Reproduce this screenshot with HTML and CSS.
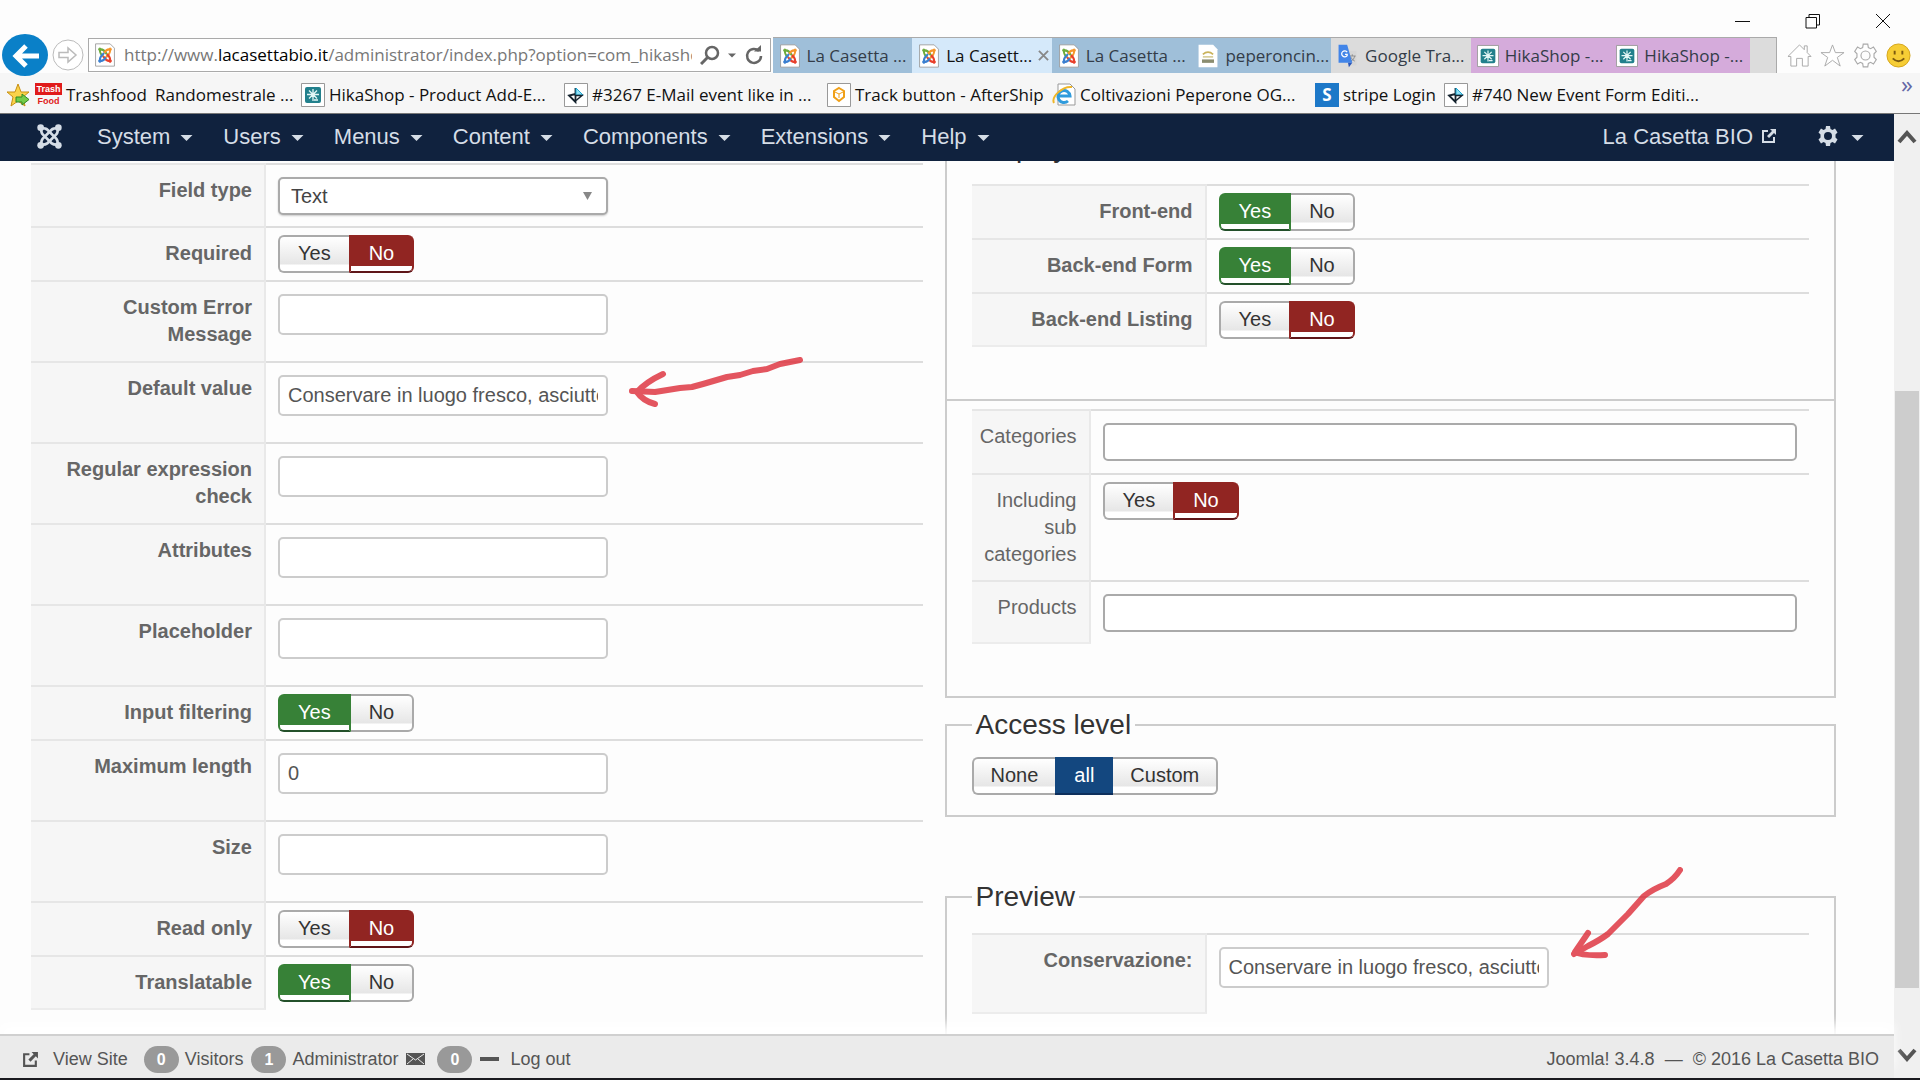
FILE: index.html
```html
<!DOCTYPE html>
<html lang="en">
  <head>
    <meta charset="UTF-8" />
    <meta name="viewport" content="width=device-width, initial-scale=1.0" />
    <title>La Casetta BIO - Administration</title>
    <link rel="stylesheet" href="styles.css">
  </head>
  <body>
    <!-- shared icons -->
    <svg class="sprite" aria-hidden="true">
      <symbol id="joomla" viewBox="0 0 24 24">
        <g fill="none" stroke="currentColor" stroke-width="2.600">
          <path d="M4 4C6 4 8.500 4 10 5.500L18.500 14C20 15.500 20 18 20 20" />
          <path d="M4 4C4 6 4 8.500 5.500 10L14 18.500C15.500 20 18 20 20 20" />
          <path d="M20 4C18 4 15.500 4 14 5.500L5.500 14C4 15.500 4 18 4 20" />
          <path d="M20 4C20 6 20 8.500 18.500 10L10 18.500C8.500 20 6 20 4 20" />
        </g>
        <g fill="currentColor">
          <circle cx="3.500" cy="3.500" r="3.200" /><circle cx="20.500" cy="3.500" r="3.200" />
          <circle cx="3.500" cy="20.500" r="3.200" /><circle cx="20.500" cy="20.500" r="3.200" />
        </g>
      </symbol>
      <symbol id="joomla-page" viewBox="0 0 24 28">
        <path d="M1 1h17l5 5v21H1z" fill="#fff" stroke="#999" />
        <g fill="none" stroke-width="3.200" transform="translate(3 4) scale(.75 .85)">
          <path d="M4 4C6 4 8.500 4 10 5.500L15 10.500M4 4C4 6 4 8.500 5.500 10L9 13.500" stroke="#6cab3c" />
          <path d="M20 4C20 6 20 8.500 18.500 10L13.500 15M20 4C18 4 15.500 4 14 5.500L10.500 9" stroke="#f6962b" />
          <path d="M20 20C18 20 15.500 20 14 18.500L9 13.500M20 20C20 18 20 15.500 18.500 14L15 10.500" stroke="#e8402c" />
          <path d="M4 20C4 18 4 15.500 5.500 14L10.500 9M4 20C6 20 8.500 20 10 18.500L13.500 15" stroke="#3b7fd0" />
          <circle cx="4" cy="4" r="2" fill="#6cab3c" stroke="#6cab3c" stroke-width="1" /><circle cx="20" cy="4" r="2" fill="#f6962b" stroke="#f6962b" stroke-width="1" />
          <circle cx="4" cy="20" r="2" fill="#3b7fd0" stroke="#3b7fd0" stroke-width="1" /><circle cx="20" cy="20" r="2" fill="#e8402c" stroke="#e8402c" stroke-width="1" />
        </g>
      </symbol>
      <symbol id="hika" viewBox="0 0 24 24">
        <path d="M.5.5h23v23H.5z" fill="#fff" stroke="#999" />
        <rect x="4" y="4" width="16" height="16" rx="2" fill="#22808c" />
        <path d="M12 6v12M6 11.500h12M8 7.500l8 8M16 7.500l-8 8M13 17h4" stroke="#e3f6f6" stroke-width="1.300" />
      </symbol>
      <symbol id="event" viewBox="0 0 24 24">
        <path d="M.5.5h23v23H.5z" fill="#fff" stroke="#999" />
        <path d="M11.500 5v14L5 12.500l6.500-1.500" fill="none" stroke="#15232e" stroke-width="1.800" />
        <path d="M12 5l7 7h-7z" fill="#8fe1f7" stroke="#22a7d0" />
        <path d="M11 12.500h7l-6 5" fill="none" stroke="#15232e" stroke-width="1.500" />
      </symbol>
      <symbol id="external" viewBox="0 0 16 16">
        <path d="M7 3H2v11h11V9" fill="none" stroke="currentColor" stroke-width="2" />
        <path d="M9 1h6v6l-2-2-5 5-2-2 5-5z" fill="currentColor" />
      </symbol>
      <symbol id="gear" viewBox="-1 -1 22 22">
        <path fill-rule="evenodd" d="M8 0h4l.5 3 2 1L17 2.500l2.500 4-2 2v3l2 2-2.500 4-2.500-1.500-2 1-.5 3H8l-.5-3-2-1L3 17.500l-2.500-4 2-2v-3l-2-2 2.500-4L5.500 4l2-1zM10 6a4 4 0 1 0 0 8 4 4 0 0 0 0-8z" />
      </symbol>
      <symbol id="caret" viewBox="0 0 12 6"><path d="M0 0h12L6 6z" fill="currentColor" /></symbol>
    </svg>

    <header class="browser">
      <div class="window-controls">
        <button aria-label="Minimize"><svg viewBox="0 0 16 16"><path d="M0 8.500h15" /></svg></button>
        <button aria-label="Restore"><svg viewBox="0 0 16 16"><path d="M1 4.500h10.500v10.500H1zM4 4.500v-3h10.500v10.500h-3" /></svg></button>
        <button aria-label="Close"><svg viewBox="0 0 16 16"><path d="M1 1l14 14M15 1L1 15" /></svg></button>
      </div>

      <div class="toolbar">
        <button class="back" aria-label="Back">
          <svg viewBox="0 0 46 42"><ellipse cx="23" cy="21" rx="23" ry="21" fill="#0a80c8" /><path d="M37 22H14M24 12L14 22l10 10" fill="none" stroke="#fff" stroke-width="5" /></svg>
        </button>
        <button class="forward" aria-label="Forward">
          <svg viewBox="0 0 32 32"><circle cx="16" cy="16" r="15" fill="#fff" stroke="#bbb" /><path d="M7 13.500h9V9l8 7-8 7v-4.500H7z" fill="none" stroke="#bbb" stroke-width="1.500" /></svg>
        </button>
        <div class="address">
          <svg class="page-icon"><use href="#joomla-page" /></svg>
          <a class="url" href="#">http://www.<b>lacasettabio.it</b>/administrator/index.php?option=com_hikashop&amp;ctrl=field</a>
          <button aria-label="Search"><svg class="icon-search" viewBox="0 0 20 20"><circle cx="12" cy="8" r="6" fill="none" stroke="#666" stroke-width="2.500" /><path d="M8 12l-7 7" stroke="#666" stroke-width="3" /></svg></button>
          <button aria-label="Show address bar list"><svg class="caret-small"><use href="#caret" /></svg></button>
          <button aria-label="Refresh"><svg class="icon-search" viewBox="0 0 20 20"><path d="M15 6a7 7 0 1 0 2 5" fill="none" stroke="#666" stroke-width="2.500" /><path d="M10 6.500h7V0z" fill="#666" /></svg></button>
        </div>
        <nav class="tabs">
          <a class="tab" href="#"><svg class="page-icon"><use href="#joomla-page" /></svg>La Casetta ...</a>
          <a class="tab tab-active" href="#"><svg class="page-icon"><use href="#joomla-page" /></svg>La Casett...<svg class="tab-close" viewBox="0 0 12 12"><path d="M1 1l10 10M11 1L1 11" stroke="#888" stroke-width="2" /></svg></a>
          <a class="tab" href="#"><svg class="page-icon"><use href="#joomla-page" /></svg>La Casetta ...</a>
          <a class="tab" href="#"><svg class="page-icon" viewBox="0 0 24 28"><path d="M1 1h17l5 5v21H1z" fill="#fff" /><path d="M6 12q6-5 12 0" fill="none" stroke="#c9b25a" stroke-width="2" /><path d="M6 14h12v2H6z" fill="#d8cf9c" /><path d="M5 18h14v4H5z" fill="#8b8d70" /></svg>peperoncin...</a>
          <a class="tab tab-gray" href="#"><svg class="page-icon" viewBox="0 0 24 28"><path d="M9 8h13v17H13z" fill="#d6d6d6" /><path d="M14 14h7M17 12v2M20 14q-1 5-5 6M15 15q2 4 5 5" fill="none" stroke="#888" /><path d="M1 1h10l6 21H1z" fill="#4285e8" /><path d="M12 22h5l-4 5z" fill="#2a56b8" /><path d="M11 9.500a3.500 3.500 0 1 0 0 4V12H8.500" fill="none" stroke="#fff" stroke-width="1.500" /></svg>Google Tra...</a>
          <a class="tab tab-purple" href="#"><svg class="page-icon"><use href="#hika" /></svg>HikaShop -...</a>
          <a class="tab tab-purple" href="#"><svg class="page-icon"><use href="#hika" /></svg>HikaShop -...</a>
          <button class="new-tab" aria-label="New tab"></button>
        </nav>
        <div class="tools">
          <button aria-label="Home"><svg viewBox="0 0 26 26"><path d="M1 14L13 2l5 5V3h3v7l4 4h-3v10h-6v-8h-6v8H4V14z" /></svg></button>
          <button aria-label="Favorites"><svg viewBox="0 0 26 26"><path d="M13 2l3 8h9l-7 5 3 9-8-6-8 6 3-9-7-5h9z" /></svg></button>
          <button aria-label="Tools"><svg><use href="#gear" /></svg></button>
          <button aria-label="Feedback"><svg viewBox="0 0 26 26"><circle class="smile" cx="13" cy="13" r="12" /><path class="smile-face" d="M9 8v4M17 8v4M7 16q6 6 12 0" /></svg></button>
        </div>
      </div>

      <nav class="bookmarks">
        <a class="bookmark" href="#">
          <svg viewBox="0 0 24 24"><path d="M12 1l3 8h8l-6 5 2 9-7-5-7 5 2-9-6-5h8z" fill="#fbd34a" stroke="#c78f13" /><path d="M10 14h6v-3l7 5.500-7 5.500v-3h-6z" fill="#74cc4a" stroke="#2f8a22" /></svg>
          <span class="trash-logo"><span>Trash</span><span>Food</span></span>Trashfood
        </a>
        <a class="bookmark" href="#">Randomestrale ...</a>
        <a class="bookmark" href="#"><svg><use href="#hika" /></svg>HikaShop - Product Add-E...</a>
        <a class="bookmark" href="#"><svg><use href="#event" /></svg>#3267 E-Mail event like in ...</a>
        <a class="bookmark" href="#"><svg viewBox="0 0 24 24"><path d="M.5.5h23v23H.5z" fill="#fff" stroke="#999" /><path d="M12 5l5 3v6l-5 4-5-4V8z" fill="none" stroke="#f0a018" stroke-width="2" /><path d="M8 9l4 2 4-2M12 11v4" fill="none" stroke="#f0a018" /></svg>Track button - AfterShip</a>
        <a class="bookmark" href="#"><svg viewBox="0 0 24 24"><path d="M6 1h12l5 5v16H6z" fill="#fff" stroke="#999" /><path d="M5 13h13a6 6 0 1 0-2 5" fill="none" stroke="#2f9bdc" stroke-width="3" /><path d="M2 20C-1 14 10 3 20 4" fill="none" stroke="#efb628" stroke-width="2" /></svg>Coltivazioni Peperone OG...</a>
        <a class="bookmark" href="#"><span class="stripe-logo">S</span>stripe Login</a>
        <a class="bookmark" href="#"><svg><use href="#event" /></svg>#740 New Event Form Editi...</a>
        <button class="more" aria-label="More favorites">»</button>
      </nav>
    </header>

    <div class="viewport">
      <div class="page">
        <nav class="navbar">
          <svg class="brand"><use href="#joomla" /></svg>
          <button>System<svg><use href="#caret" /></svg></button>
          <button>Users<svg><use href="#caret" /></svg></button>
          <button>Menus<svg><use href="#caret" /></svg></button>
          <button>Content<svg><use href="#caret" /></svg></button>
          <button>Components<svg><use href="#caret" /></svg></button>
          <button>Extensions<svg><use href="#caret" /></svg></button>
          <button>Help<svg><use href="#caret" /></svg></button>
          <a class="site-link" href="#">La Casetta BIO<svg><use href="#external" /></svg></a>
          <button class="settings" aria-label="Settings">
            <svg class="gear"><use href="#gear" /></svg>
            <svg><use href="#caret" /></svg>
          </button>
        </nav>

        <main class="content">
          <section>
            <table class="fields">
              <tr>
                <th><label for="fieldType">Field type</label></th>
                <td><select id="fieldType" class="select"><option>Text</option></select></td>
              </tr>
              <tr>
                <th id="required">Required</th>
                <td>
                  <div class="toggle" role="radiogroup" aria-labelledby="required">
                    <input type="radio" name="required" id="required1" /><label for="required1">Yes</label>
                    <input type="radio" name="required" id="required0" checked /><label class="no" for="required0">No</label>
                  </div>
                </td>
              </tr>
              <tr>
                <th><label for="errorMessage">Custom Error Message</label></th>
                <td><input class="text" id="errorMessage" /></td>
              </tr>
              <tr>
                <th><label for="defaultValue">Default value</label></th>
                <td>
                  <div class="marked">
                    <input class="text" id="defaultValue" value="Conservare in luogo fresco, asciutto" />
                    <svg class="arrow arrow-default" viewBox="0 0 176 54">
                      <path d="M172 5L152 9L139 14L125 16L112 20L99 22L75 29L64 32L52 33L27 37L4 36" />
                      <path d="M35 19Q18 27 9 37Q15 46 27 49" />
                    </svg>
                  </div>
                </td>
              </tr>
              <tr>
                <th><label for="regex">Regular expression check</label></th>
                <td><input class="text" id="regex" /></td>
              </tr>
              <tr>
                <th><label for="attributes">Attributes</label></th>
                <td><input class="text" id="attributes" /></td>
              </tr>
              <tr>
                <th><label for="placeholder">Placeholder</label></th>
                <td><input class="text" id="placeholder" /></td>
              </tr>
              <tr>
                <th id="filtering">Input filtering</th>
                <td>
                  <div class="toggle" role="radiogroup" aria-labelledby="filtering">
                    <input type="radio" name="filtering" id="filtering1" checked /><label for="filtering1">Yes</label>
                    <input type="radio" name="filtering" id="filtering0" /><label class="no" for="filtering0">No</label>
                  </div>
                </td>
              </tr>
              <tr>
                <th><label for="maxLength">Maximum length</label></th>
                <td><input class="text" id="maxLength" value="0" /></td>
              </tr>
              <tr>
                <th><label for="size">Size</label></th>
                <td><input class="text" id="size" /></td>
              </tr>
              <tr>
                <th id="readonly">Read only</th>
                <td>
                  <div class="toggle" role="radiogroup" aria-labelledby="readonly">
                    <input type="radio" name="readonly" id="readonly1" /><label for="readonly1">Yes</label>
                    <input type="radio" name="readonly" id="readonly0" checked /><label class="no" for="readonly0">No</label>
                  </div>
                </td>
              </tr>
              <tr>
                <th id="translatable">Translatable</th>
                <td>
                  <div class="toggle" role="radiogroup" aria-labelledby="translatable">
                    <input type="radio" name="translatable" id="translatable1" checked /><label for="translatable1">Yes</label>
                    <input type="radio" name="translatable" id="translatable0" /><label class="no" for="translatable0">No</label>
                  </div>
                </td>
              </tr>
            </table>
          </section>

          <section class="side">
            <fieldset>
              <legend>Display</legend>
              <table class="fields">
                <tr>
                  <th id="frontend">Front-end</th>
                  <td>
                    <div class="toggle" role="radiogroup" aria-labelledby="frontend">
                      <input type="radio" name="frontend" id="frontend1" checked /><label for="frontend1">Yes</label>
                      <input type="radio" name="frontend" id="frontend0" /><label class="no" for="frontend0">No</label>
                    </div>
                  </td>
                </tr>
                <tr>
                  <th id="backend">Back-end Form</th>
                  <td>
                    <div class="toggle" role="radiogroup" aria-labelledby="backend">
                      <input type="radio" name="backend" id="backend1" checked /><label for="backend1">Yes</label>
                      <input type="radio" name="backend" id="backend0" /><label class="no" for="backend0">No</label>
                    </div>
                  </td>
                </tr>
                <tr>
                  <th id="listing">Back-end Listing</th>
                  <td>
                    <div class="toggle" role="radiogroup" aria-labelledby="listing">
                      <input type="radio" name="listing" id="listing1" /><label for="listing1">Yes</label>
                      <input type="radio" name="listing" id="listing0" checked /><label class="no" for="listing0">No</label>
                    </div>
                  </td>
                </tr>
              </table>
            </fieldset>

            <fieldset class="restrictions">
              <table class="fields narrow">
                <tr>
                  <th><label for="categories">Categories</label></th>
                  <td><input class="chosen" id="categories" /></td>
                </tr>
                <tr>
                  <th id="subcats">Including sub categories</th>
                  <td>
                    <div class="toggle" role="radiogroup" aria-labelledby="subcats">
                      <input type="radio" name="subcats" id="subcats1" /><label for="subcats1">Yes</label>
                      <input type="radio" name="subcats" id="subcats0" checked /><label class="no" for="subcats0">No</label>
                    </div>
                  </td>
                </tr>
                <tr>
                  <th><label for="products">Products</label></th>
                  <td><input class="chosen" id="products" /></td>
                </tr>
              </table>
            </fieldset>

            <fieldset class="access">
              <legend>Access level</legend>
              <div class="toggle">
                <input type="radio" name="access" id="accessNone" /><label for="accessNone">None</label>
                <input type="radio" name="access" id="accessAll" checked /><label class="all" for="accessAll">all</label>
                <input type="radio" name="access" id="accessCustom" /><label for="accessCustom">Custom</label>
              </div>
            </fieldset>

            <fieldset class="preview">
              <legend>Preview</legend>
              <table class="fields">
                <tr>
                  <th><label for="conservazione">Conservazione:</label></th>
                  <td>
                    <div class="marked">
                      <input class="text" id="conservazione" value="Conservare in luogo fresco, asciutto" />
                      <svg class="arrow arrow-preview" viewBox="0 0 116 96">
                        <path d="M111 5Q106 13 97 19Q84 24 75 31L59 49L48 60L39 69Q31 75 19 81L5 89" />
                        <path d="M19 68L6 87Q13 91 36 90" />
                      </svg>
                    </div>
                  </td>
                </tr>
              </table>
            </fieldset>
          </section>
        </main>

        <footer class="status">
          <a href="#"><svg class="status-external"><use href="#external" /></svg>View Site</a>
          <span><span class="badge">0</span>Visitors</span>
          <span><span class="badge">1</span>Administrator</span>
          <a class="mail" href="#" aria-label="Messages"><svg viewBox="0 0 19 12"><path d="M0 0h19v12H0z" fill="#555" /><path d="M1 1l8.500 6L18 1M1 11l6-5M18 11l-6-5" fill="none" stroke="#ebebeb" /></svg><span class="badge">0</span></a>
          <a class="logout" href="#"><svg viewBox="0 0 19 4"><path d="M0 0h19v4H0z" fill="#555" /></svg>Log out</a>
          <span class="copyright">Joomla! 3.4.8 &nbsp;—&nbsp; © 2016 La Casetta BIO</span>
        </footer>
      </div>

      <div class="scrollbar" aria-hidden="true">
        <svg viewBox="0 0 20 14"><path d="M2 12l8-9 8 9" /></svg>
        <div class="track"><div class="thumb"></div></div>
        <svg viewBox="0 0 20 14"><path d="M2 2l8 9 8-9" /></svg>
      </div>
    </div>
  </body>
</html>
```
FILE: styles.css
```css
:root {
  --navy: #10223e;
  --line: #dddddd;
  --border: #cccccc;
  --text: #555555;
  --green: #378137;
  --red: #912522;
  --blue: #13477f;
}

* {
  box-sizing: border-box;
}

body {
  display: flex;
  flex-direction: column;
  height: 100vh;
  margin: 0;
  overflow: hidden;
  background: #fdfdfd;
  border-bottom: 2px solid #1a1a1f;
  font-family: "Liberation Sans", Arial, sans-serif;
  font-size: 20px;
  line-height: 27px;
  color: var(--text);
}

a {
  color: inherit;
  text-decoration: none;
}

button {
  padding: 0;
  border: none;
  background: none;
  color: inherit;
  font: inherit;
}

svg {
  display: block;
  flex: none;
}

.sprite {
  display: none;
}

/* browser */

.browser {
  font-family: "Open Sans", "Noto Sans", sans-serif;
  font-size: 17px;
  line-height: 24px;
  color: #111;
}

.window-controls {
  display: flex;
  justify-content: flex-end;
  align-items: flex-end;
  gap: 54px;
  height: 37px;
  padding: 0 29px 8px 0;
}

.window-controls svg {
  width: 16px;
  height: 16px;
  fill: none;
  stroke: #111;
}

.toolbar {
  display: flex;
  align-items: center;
  height: 36px;
}

.back {
  margin: 0 4px 0 2px;
}

.back svg {
  width: 46px;
  height: 42px;
}

.forward {
  margin-right: 4px;
}

.forward svg {
  width: 32px;
  height: 32px;
}

.address {
  display: flex;
  flex: 2 1 0;
  align-items: center;
  gap: 8px;
  min-width: 0;
  height: 34px;
  padding: 0 6px 0 5px;
  border: 1px solid #aaa;
  background: #fff;
}

.url {
  flex: 1;
  min-width: 0;
  overflow: hidden;
  white-space: nowrap;
  color: #777;
}

.url b {
  font-weight: normal;
  color: #000;
}

.icon-search {
  width: 20px;
  height: 20px;
}

.caret-small {
  width: 8px;
  height: 5px;
  color: #666;
}

.page-icon {
  width: 22px;
  height: 24px;
}

.tabs {
  display: flex;
  flex: 3 1 0;
  align-self: stretch;
  min-width: 0;
  margin-left: 2px;
  border-top: 1px solid #aaa;
}

.tab {
  display: flex;
  flex: 1;
  align-items: center;
  gap: 6px;
  min-width: 0;
  padding-left: 6px;
  background: #9fbfd9;
  white-space: nowrap;
  overflow: hidden;
  color: #333c48;
}

.tab-active {
  background: #d5e9fa;
  color: #111;
}

.tab-close {
  width: 11px;
  height: 11px;
}

.tab-gray {
  background: #dcdcdc;
}

.tab-purple {
  background: #d5abdb;
}

.new-tab {
  width: 27px;
  border-right: 1px solid #aaa;
  background: #dcdcdc;
}

.tools {
  display: flex;
  gap: 8px;
  padding: 0 9px 0 10px;
}

.tools svg {
  width: 25px;
  height: 25px;
  fill: #fff;
  stroke: #aaa;
}

.tools .smile {
  fill: #f6cd35;
  stroke: #d4a51c;
}

.tools .smile-face {
  fill: none;
  stroke: #7b5a10;
  stroke-width: 2;
}

.bookmarks {
  display: grid;
  grid-template-columns: 149px 146px 263px 263px 225px 263px 129px 1fr auto;
  align-items: center;
  height: 41px;
  padding: 4px 7px 0 6px;
  background: #f6f6f6;
  border-bottom: 1px solid #777;
}

.bookmark {
  display: flex;
  align-items: center;
  gap: 4px;
  white-space: nowrap;
}

.bookmark svg {
  width: 24px;
  height: 24px;
}

.trash-logo {
  display: flex;
  flex-direction: column;
  width: 27px;
  margin-left: 1px;
  font: bold 9px/12px "Liberation Sans", Arial, sans-serif;
  text-align: center;
  color: #e01b1b;
}

.trash-logo span:first-child {
  background: #e01b1b;
  color: #fff;
}

.stripe-logo {
  width: 24px;
  background: #1d78c8;
  color: #fff;
  font-weight: bold;
  text-align: center;
}

.more {
  align-self: start;
  line-height: 14px;
  font-size: 24px;
  color: #6467a5;
}

/* page */

.viewport {
  display: flex;
  flex: 1;
  min-height: 0;
}

.page {
  display: flex;
  flex: 1;
  flex-direction: column;
  min-width: 0;
}

.navbar {
  display: flex;
  flex: none;
  align-items: center;
  gap: 30px;
  height: 47px;
  padding: 0 30px 3px 37px;
  background: var(--navy);
  font-size: 22px;
  color: #d5dde6;
}

.navbar button,
.navbar a {
  display: flex;
  align-items: center;
  gap: 10px;
  white-space: nowrap;
}

.navbar button svg {
  width: 13px;
  height: 6px;
  margin-top: 4px;
}

.navbar .brand {
  width: 25px;
  height: 25px;
  margin-right: 5px;
}

.navbar .site-link {
  gap: 8px;
  margin-left: auto;
}

.site-link svg {
  width: 16px;
  height: 16px;
}

.navbar .settings {
  gap: 12px;
  margin-left: 10px;
}

.navbar .settings .gear {
  width: 22px;
  height: 22px;
  margin-top: 0;
  fill: currentColor;
}

.content {
  display: grid;
  flex: 1;
  grid-template-columns: 1fr 1fr;
  gap: 22px;
  align-items: start;
  min-height: 0;
  padding: 2px 58px 0 31px;
  overflow: hidden;
}

.side {
  margin-top: -31px;
}

.fields {
  width: 100%;
  border-spacing: 0;
}

.fields th {
  width: 235px;
  padding: 12px 12px 12px 24px;
  border-top: 2px solid #e6e6e6;
  border-right: 2px solid #e9e9e9;
  background: #f6f6f6;
  color: #666;
  text-align: right;
  vertical-align: top;
}

.fields tr:last-child th {
  border-bottom: 2px solid #ececec;
}

.fields td {
  padding: 7px 12px;
  border-top: 2px solid var(--line);
  vertical-align: top;
}

.fields.narrow th {
  width: 119px;
  padding-left: 4px;
  font-weight: normal;
}

.text,
.select,
.chosen {
  display: block;
  width: 330px;
  height: 41px;
  margin: 5px 0 19px;
  padding: 0 8px;
  border: 2px solid var(--border);
  border-radius: 5px;
  background: #fff;
  color: var(--text);
  font: inherit;
}

.select,
.chosen {
  height: 38px;
  margin: 5px 0 4px;
  border-color: #aaa;
}

.select {
  padding: 0 11px;
  appearance: none;
  background: #fff url("data:image/svg+xml,%3Csvg xmlns='http://www.w3.org/2000/svg' width='9' height='8'%3E%3Cpath d='M0 0h9L4.500 8z' fill='%23888'/%3E%3C/svg%3E") no-repeat right 14px center;
  box-shadow: 0 1px 2px rgba(0, 0, 0, 0.2);
  color: #444;
}

.chosen {
  width: 100%;
  margin-bottom: 5px;
}

.toggle {
  display: flex;
}

.toggle input {
  width: 0;
  height: 0;
  margin: 0;
  appearance: none;
}

.toggle label {
  height: 38px;
  padding: 3px 18px 0;
  border: 2px solid #aaa;
  border-width: 2px 0;
  background: linear-gradient(#fff, #e6e6e6 calc(100% - 7px), #fff calc(100% - 6px));
  color: #333;
}

.toggle label:first-of-type {
  border-left-width: 2px;
  border-radius: 6px 0 0 6px;
}

.toggle label:last-of-type {
  border-right-width: 2px;
  border-radius: 0 6px 6px 0;
}

.toggle input:checked + label {
  border-color: var(--green) var(--green) #23502a;
  background: linear-gradient(var(--green) calc(100% - 5px), #fff calc(100% - 5px));
  color: #fff;
}

.toggle input:checked + label:first-of-type {
  border-right-width: 2px;
}

.toggle input:checked + .no {
  border-color: var(--red) var(--red) #5e1518;
  border-left-width: 2px;
  background: linear-gradient(var(--red) calc(100% - 5px), #fff calc(100% - 5px));
}

.access .toggle label {
  padding: 3px 17px 0;
}

.access .toggle input:checked + .all {
  padding: 3px 19px 0;
  border-color: var(--blue) var(--blue) #0d2f5c;
  background: var(--blue);
}

fieldset {
  min-width: 0;
  margin: 0;
  padding: 16px 25px 20px;
  border: 2px solid var(--border);
}

fieldset .fields {
  margin: 4px 0 32px;
}

legend {
  padding: 0 4px;
  font-size: 28px;
  line-height: 32px;
  color: #333;
}

.restrictions {
  padding-top: 4px;
  border-top: none;
}

.access {
  margin-top: 11px;
}

.preview {
  margin-top: 64px;
}

/* hand-drawn marks next to the inputs */

.marked {
  position: relative;
  width: 330px;
}

.arrow {
  position: absolute;
  left: calc(100% + 20px);
  fill: none;
  stroke: #dd2c38;
  stroke-width: 6;
  stroke-linecap: round;
  stroke-linejoin: round;
  opacity: 0.8;
}

.arrow-default {
  top: -20px;
  width: 176px;
  height: 54px;
}

.arrow-preview {
  top: -82px;
  width: 116px;
  height: 96px;
}

.status {
  display: flex;
  flex: none;
  align-items: center;
  gap: 8px;
  height: 44px;
  padding: 4px 15px 0 22px;
  border-top: 2px solid #d0d0d0;
  background: #ebebeb;
  box-shadow: 0 -10px 10px rgba(255, 255, 255, 0.9);
  font-size: 18px;
  position: relative;
}

.status > * {
  display: flex;
  align-items: center;
  gap: 6px;
}

.status a:first-child {
  gap: 14px;
  margin-right: 8px;
}

.status-external {
  width: 17px;
  height: 17px;
}

.status .mail {
  gap: 12px;
}

.status .mail svg {
  width: 19px;
  height: 12px;
}

.status .logout {
  gap: 11px;
}

.status .logout svg {
  width: 19px;
  height: 4px;
}

.badge {
  min-width: 35px;
  border-radius: 14px;
  background: #999;
  color: #fff;
  font-size: 16px;
  font-weight: bold;
  text-align: center;
}

.status .copyright {
  margin-left: auto;
}

.scrollbar {
  display: flex;
  flex-direction: column;
  align-items: center;
  width: 26px;
  padding: 16px 0;
  background: #f0f0f0;
}

.scrollbar svg {
  width: 20px;
  height: 14px;
  fill: none;
  stroke: #555;
  stroke-width: 4;
}

.track {
  display: flex;
  flex: 1;
  flex-direction: column;
  width: 24px;
}

.track::before {
  content: "";
  flex: 247;
}

.thumb {
  flex: 597;
  background: #cdcdcd;
}

.track::after {
  content: "";
  flex: 60;
}
```
